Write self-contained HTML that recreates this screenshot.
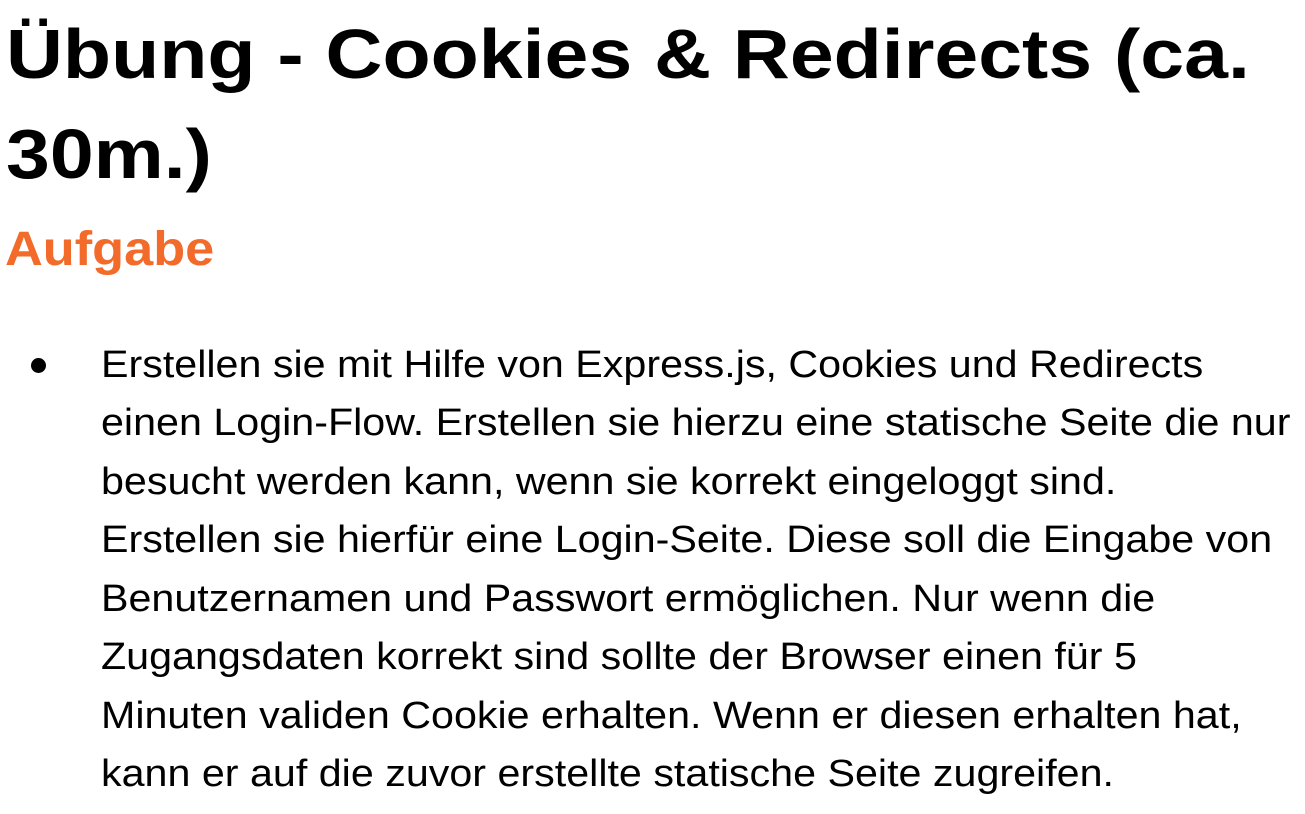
<!DOCTYPE html>
<html><head><meta charset="utf-8"><style>
body{margin:0;width:1305px;height:814px;background:#fff;overflow:hidden;font-family:"Liberation Sans",sans-serif;color:#000;position:relative}
.t{position:absolute;left:6px;font-weight:bold;font-size:70px;white-space:nowrap;transform:scaleX(1.126);transform-origin:left}
.a{position:absolute;left:5px;top:222px;font-weight:bold;font-size:48px;color:#f26b2a;white-space:nowrap;transform:scaleX(1.09);transform-origin:left}
.l{position:absolute;left:101px;font-size:38px;white-space:nowrap;line-height:1;transform:scaleX(1.085);transform-origin:left}
.dot{position:absolute;left:31px;top:358px;width:15px;height:15px;border-radius:50%;background:#000}
</style></head><body>
<div class="t" style="top:14px">Übung - Cookies &amp; Redirects (ca.</div>
<div class="t" style="top:114px">30m.)</div>
<div class="a">Aufgabe</div>
<div class="dot"></div>
<div class="l" style="top:346px">Erstellen sie mit Hilfe von Express.js, Cookies und Redirects</div>
<div class="l" style="top:404px">einen Login-Flow. Erstellen sie hierzu eine statische Seite die nur</div>
<div class="l" style="top:463px">besucht werden kann, wenn sie korrekt eingeloggt sind.</div>
<div class="l" style="top:521px">Erstellen sie hierfür eine Login-Seite. Diese soll die Eingabe von</div>
<div class="l" style="top:580px">Benutzernamen und Passwort ermöglichen. Nur wenn die</div>
<div class="l" style="top:638px">Zugangsdaten korrekt sind sollte der Browser einen für 5</div>
<div class="l" style="top:697px">Minuten validen Cookie erhalten. Wenn er diesen erhalten hat,</div>
<div class="l" style="top:755px">kann er auf die zuvor erstellte statische Seite zugreifen.</div>
</body></html>
